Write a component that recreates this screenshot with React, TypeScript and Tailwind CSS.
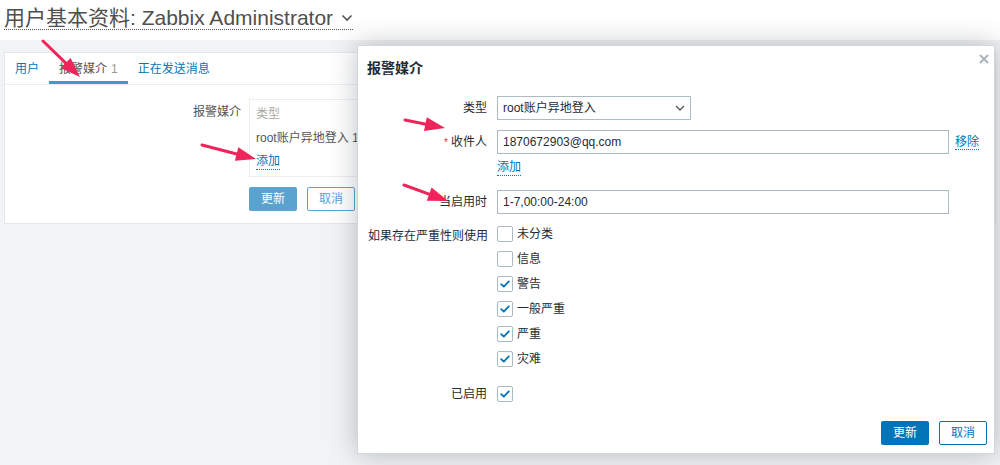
import React from "react";

const font = "font-['Liberation_Sans','Noto_Sans_CJK_SC',sans-serif]";

function Arrow({ x1, y1, x2, y2 }: { x1: number; y1: number; x2: number; y2: number }) {
  const dx = x2 - x1;
  const dy = y2 - y1;
  const len = Math.hypot(dx, dy);
  const ux = dx / len;
  const uy = dy / len;
  const head = 20;
  const half = 7;
  const bx = x2 - ux * head;
  const by = y2 - uy * head;
  const pts = `${x2},${y2} ${bx - uy * half},${by + ux * half} ${bx + uy * half},${by - ux * half}`;
  return (
    <g>
      <line x1={x1} y1={y1} x2={bx + ux * 2} y2={by + uy * 2} stroke="#f0245a" strokeWidth={3} strokeLinecap="round" />
      <polygon points={pts} fill="#f0245a" />
    </g>
  );
}

function Check({ on }: { on: boolean }) {
  return (
    <span className="w-4 h-4 border border-[#acbbc2] bg-white rounded-[2px] flex items-center justify-center shrink-0">
      {on && (
        <svg width="12" height="12" viewBox="0 0 12 12" fill="none">
          <path d="M2.2 6.2 L4.8 8.6 L9.8 3.4" stroke="#0275b8" strokeWidth={1.8} strokeLinecap="round" strokeLinejoin="round" />
        </svg>
      )}
    </span>
  );
}

function LinkText({ children }: { children: React.ReactNode }) {
  return (
    <span className="text-[#0275b8] border-b border-dotted border-[#0275b8] leading-[15px]">{children}</span>
  );
}

const severities: [string, boolean][] = [
  ["未分类", false],
  ["信息", false],
  ["警告", true],
  ["一般严重", true],
  ["严重", true],
  ["灾难", true],
];

export default function App() {
  return (
    <div className={`relative w-[1000px] h-[465px] overflow-hidden bg-[#f2f3f5] text-[12px] text-[#1f2c33] ${font}`}>
      {/* page header */}
      <div className="h-[40px] bg-white px-1 pt-[6px]">
        <span className="inline-flex items-center gap-2 text-[21px] leading-[23px] text-[#4f4f4f] border-b border-dotted border-[#555]">
          用户基本资料: Zabbix Administrator
          <svg width="12" height="8" viewBox="0 0 12 8" fill="none">
            <path d="M1.5 1.5 L6 6 L10.5 1.5" stroke="#555" strokeWidth={1.6} />
          </svg>
        </span>
      </div>

      {/* user card */}
      <div className="mx-1 mt-3 h-[172px] bg-white border border-[#e3e7ea]">
        <div className="flex h-[32px] border-b border-[#ebeef0]">
          <div className="px-[10px] flex items-center text-[#0275b8]">用户</div>
          <div className="px-[10px] flex items-center text-[#555] border-b-[3px] border-[#4796c4] pt-[3px]">
            报警媒介 <span className="ml-1 text-[#999]">1</span>
          </div>
          <div className="px-[10px] flex items-center text-[#0275b8]">正在发送消息</div>
        </div>
        <div className="flex pt-[14px]">
          <div className="w-[244px] text-right pr-[8px] text-[#555] pt-[4px]">报警媒介</div>
          <div className="flex flex-col">
            <div className="w-[420px] border border-[#ebeef0] px-[6px] py-[2px] text-[#555]">
              <div className="h-[24px] flex items-center text-[#aaa]">类型</div>
              <div className="h-[24px] flex items-center">root账户异地登入 1</div>
              <div className="h-[24px] flex items-center">
                <LinkText>添加</LinkText>
              </div>
            </div>
            <div className="flex gap-[10px] mt-[10px]">
              <div className="w-[48px] h-[24px] bg-[#5aa3cf] text-white flex items-center justify-center rounded-[2px]">更新</div>
              <div className="w-[48px] h-[24px] border border-[#5aa3cf] text-[#5aa3cf] flex items-center justify-center rounded-[2px]">取消</div>
            </div>
          </div>
        </div>
      </div>

      {/* media dialog */}
      <div className="absolute left-[357px] top-[45px] w-[638px] h-[409px] bg-white border border-[#d0d8dc] shadow-[0_0_26px_rgba(40,50,60,0.3)] flex flex-col">
        <div className="h-[45px] flex items-center px-[9px] text-[14px] font-bold text-[#1f2c33]">报警媒介</div>
        <svg className="absolute right-[5px] top-[8px]" width="10" height="10" viewBox="0 0 10 10">
          <path d="M1 1 L9 9 M9 1 L1 9" stroke="#a9b4ba" strokeWidth={2} />
        </svg>

        <div className="flex flex-col">
          <div className="flex items-center h-[24px] mt-[5px]">
            <div className="w-[139px] text-right pr-[10px]">类型</div>
            <div className="w-[194px] h-[24px] border border-[#acbbc2] flex items-center justify-between px-[5px]">
              <span>root账户异地登入</span>
              <svg width="10" height="6" viewBox="0 0 10 6" fill="none">
                <path d="M1 1 L5 5 L9 1" stroke="#555" strokeWidth={1.3} />
              </svg>
            </div>
          </div>

          <div className="flex items-center h-[24px] mt-[10px]">
            <div className="w-[139px] text-right pr-[10px]">
              <span className="text-[#e33734] text-[10px] mr-[3px]">*</span>收件人
            </div>
            <div className="w-[452px] h-[24px] border border-[#acbbc2] flex items-center px-[5px]">1870672903@qq.com</div>
            <div className="ml-[6px]">
              <LinkText>移除</LinkText>
            </div>
          </div>

          <div className="flex h-[24px] mt-[2px] items-center">
            <div className="w-[139px]" />
            <LinkText>添加</LinkText>
          </div>

          <div className="flex items-center h-[24px] mt-[10px]">
            <div className="w-[139px] text-right pr-[10px]">当启用时</div>
            <div className="w-[452px] h-[24px] border border-[#acbbc2] flex items-center px-[5px]">1-7,00:00-24:00</div>
          </div>

          <div className="flex mt-[12px]">
            <div className="w-[139px] text-right pr-[9px] pt-[1px]">如果存在严重性则使用</div>
            <div className="flex flex-col gap-[9px]">
              {severities.map(([name, on]) => (
                <div key={name} className="flex items-center gap-[4px] h-[16px]">
                  <Check on={on} />
                  <span>{name}</span>
                </div>
              ))}
            </div>
          </div>

          <div className="flex items-center mt-[19px] h-[16px]">
            <div className="w-[139px] text-right pr-[10px]">已启用</div>
            <Check on />
          </div>
        </div>

        <div className="mt-auto mb-[8px] flex justify-end gap-[10px] pr-[7px]">
          <div className="w-[48px] h-[24px] bg-[#0275b8] text-white flex items-center justify-center rounded-[2px]">更新</div>
          <div className="w-[48px] h-[24px] border border-[#0275b8] text-[#0275b8] flex items-center justify-center rounded-[2px]">取消</div>
        </div>
      </div>

      {/* annotation arrows */}
      <svg className="absolute inset-0 pointer-events-none" width="1000" height="465">
        <Arrow x1={43} y1={41} x2={80} y2={77} />
        <Arrow x1={202} y1={145} x2={256} y2={159} />
        <Arrow x1={405} y1={120} x2={445} y2={128} />
        <Arrow x1={404} y1={185} x2={448} y2={201} />
      </svg>
    </div>
  );
}
